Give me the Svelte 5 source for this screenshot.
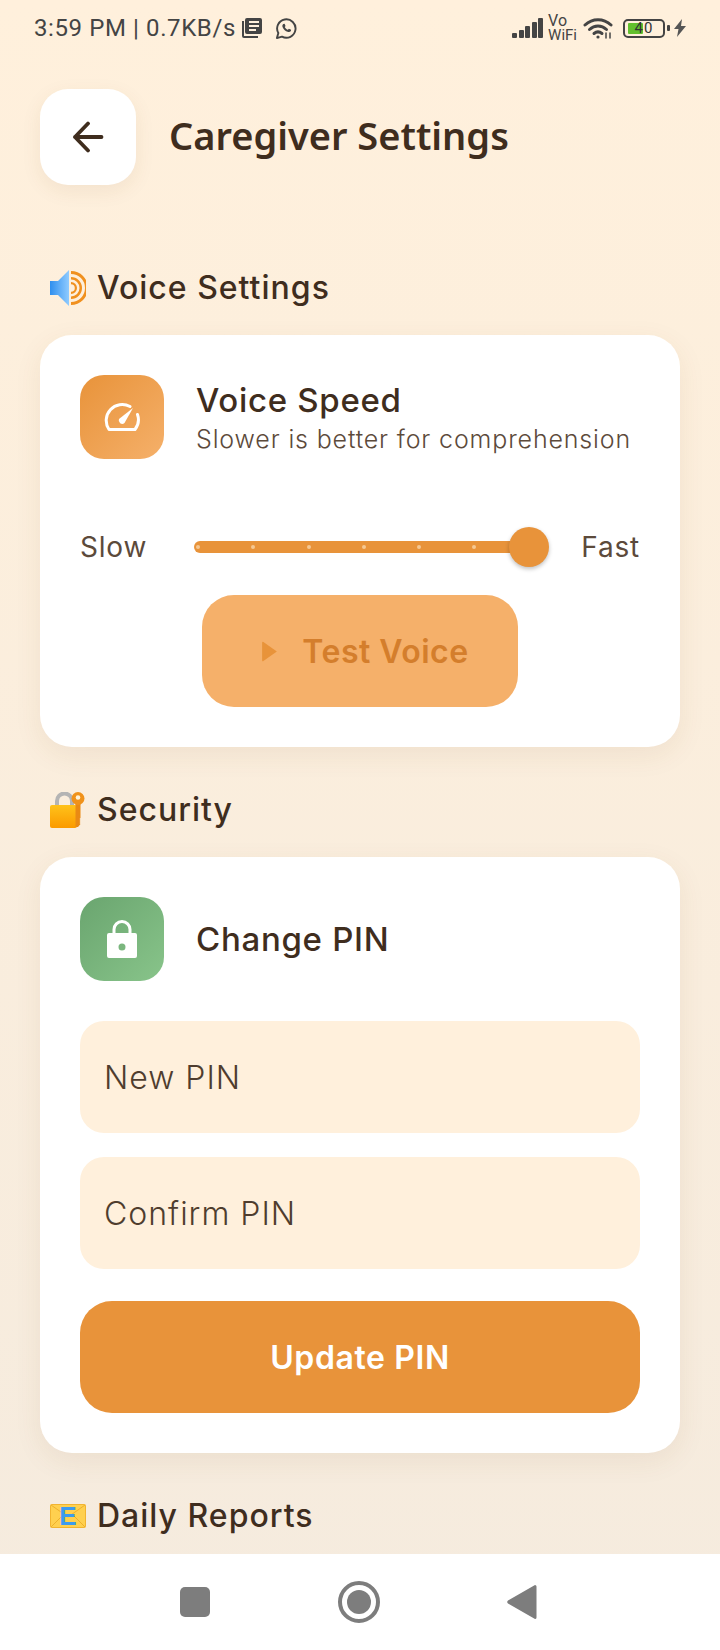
<script lang="ts">
	const ticks = [0, 1, 2, 3, 4, 5, 6];
</script>

<div class="screen">
	<div class="status">
		<span class="clock">3:59 PM | 0.7KB/s</span>
		<svg class="ic-news" viewBox="0 0 20 20" width="20" height="20">
			<path d="M0 3h2v15h14v2H2a2 2 0 0 1-2-2z" fill="#444"/>
			<path fill-rule="evenodd" d="M5 0h13a2 2 0 0 1 2 2v12a2 2 0 0 1-2 2H5a2 2 0 0 1-2-2V2a2 2 0 0 1 2-2zm2 3v2h10V3zm0 4v2h10V7zm0 4v2h7v-2z" fill="#444"/>
		</svg>
		<svg class="ic-wa" viewBox="0 0 24 24" width="23" height="23" fill="none">
			<path d="M2 22l1.5-5.2A9.6 9.6 0 1 1 7.300 20.500z" stroke="#444" stroke-width="2" stroke-linejoin="round"/>
			<path d="M8.600 7.200c-1 .8-1.200 2.200-.5 3.700 1 2 2.900 3.800 5 4.600 1.500.5 2.800.2 3.500-.9l.2-1.300-2.300-1.100-1 1.200c-1.300-.5-2.600-1.700-3.300-3l.8-1-1-2.400z" fill="#444"/>
		</svg>
		<span class="grow"></span>
		<div class="bars">
			<i style="height: 5px"></i><i style="height: 8px"></i><i style="height: 12px"></i><i style="height: 16px"></i><i style="height: 20px"></i>
		</div>
		<div class="vowifi"><span class="vo">Vo</span><span>WiFi</span></div>
		<svg class="ic-wifi" viewBox="0 0 30 22" width="30" height="22" fill="none" stroke="#444" stroke-linecap="round">
			<path d="M2 8C9.500 1 20.500 1 28 8" stroke-width="3"/>
			<path d="M6.500 12.500c5-4.600 12-4.600 17 0" stroke-width="3"/>
			<path d="M11 16.500c2.500-2 5.500-2 8 0" stroke-width="3"/>
			<circle cx="15" cy="20" r="1.600" fill="#444" stroke="none"/>
			<path d="M23 16v5M27 16v5" stroke-width="1.500"/>
		</svg>
		<div class="battery">
			<div class="cell"><span class="level"></span><span class="pct">40</span></div>
			<span class="nub"></span>
		</div>
		<svg class="ic-bolt" viewBox="0 0 12 18" width="12" height="18"><path d="M8 0L0 10h4.500L3 18l9-11H7z" fill="#555"/></svg>
	</div>

	<main class="content">
		<div class="header">
			<button class="back" aria-label="Back">
				<svg viewBox="0 0 32 32" width="32" height="32" fill="none" stroke="#3f2d1e" stroke-width="3.800" stroke-linecap="round" stroke-linejoin="round">
					<path d="M29.500 16H3M16 2.500L3 16l13 13.500"/>
				</svg>
			</button>
			<h1>Caregiver Settings</h1>
		</div>

		<h2 class="section first">
			<svg viewBox="0 0 36 36" width="36" height="36">
				<defs>
					<linearGradient id="spk" x1="0" y1="0" x2="1" y2="0"><stop offset="0" stop-color="#2f8fee"/><stop offset="1" stop-color="#8fcbff"/></linearGradient>
				</defs>
				<path d="M0 11h8L19 0v36L8 25H0z" fill="url(#spk)"/>
				<path d="M21 1a17 17 0 0 1 0 34v-3a14 14 0 0 0 0-28z" fill="#f0901e"/>
				<path d="M21 7a11 11 0 0 1 0 22v-2.500a8.500 8.500 0 0 0 0-17z" fill="#f0901e"/>
				<path d="M21 12a6 6 0 0 1 0 12v-2.200a3.800 3.800 0 0 0 0-7.600z" fill="#f0901e"/>
			</svg>
			Voice Settings
		</h2>
		<section class="card">
			<div class="row">
				<div class="tile orange">
					<svg viewBox="0 0 36 30" width="36" height="30" fill="none" stroke="#fff" stroke-width="3" stroke-linecap="round" stroke-linejoin="round">
						<path d="M26 4.500A16 16 0 0 0 5 27.500h26a16 16 0 0 0 2.500-15"/>
						<path d="M15 17l14-11-8.500 15a3.500 3.500 0 0 1-5.500-4z" fill="#fff" stroke="none"/>
					</svg>
				</div>
				<div class="row-text">
					<div class="row-title">Voice Speed</div>
					<div class="row-sub">Slower is better for comprehension</div>
				</div>
			</div>
			<div class="slider-row">
				<span class="end">Slow</span>
				<div class="slider">
					<div class="track">
						{#each ticks as t (t)}<span class="tick"></span>{/each}
					</div>
					<span class="thumb"></span>
				</div>
				<span class="end">Fast</span>
			</div>
			<button class="test">
				<svg viewBox="0 0 16 20" width="17" height="21"><path d="M1 1.500a.8.8 0 0 1 1.200-.6L15 10 2.200 19.100a.8.8 0 0 1-1.200-.6z" fill="#e8933a"/></svg>
				<span>Test Voice</span>
			</button>
		</section>

		<h2 class="section">
			<svg viewBox="0 0 36 36" width="36" height="36">
				<defs>
					<linearGradient id="lockfill" x1="0" y1="0" x2="0" y2="1"><stop offset="0" stop-color="#ffc21a"/><stop offset="1" stop-color="#fb9a00"/></linearGradient>
				</defs>
				<path d="M7 15V9a7.500 7.500 0 0 1 15 0v6" fill="none" stroke="#b4b4b4" stroke-width="4"/>
				<rect x="0" y="13" width="27" height="23" rx="2" fill="url(#lockfill)"/>
				<path d="M25.500 10h5v16l-1 1 1 1-1 1 1 1-1 1 1 1-2.500 3h-2.500z" fill="#e98a14"/>
				<circle cx="28" cy="6.500" r="6.500" fill="#f0921a"/>
				<circle cx="28" cy="5.500" r="2.300" fill="#fff3d8"/>
			</svg>
			Security
		</h2>
		<section class="card">
			<div class="row">
				<div class="tile green">
					<svg viewBox="0 0 30 38" width="30" height="38">
						<path d="M7 15V9.500a8 8 0 0 1 16 0V15" fill="none" stroke="#fff" stroke-width="3"/>
						<path fill-rule="evenodd" d="M2 13h26a2 2 0 0 1 2 2v21a2 2 0 0 1-2 2H2a2 2 0 0 1-2-2V15a2 2 0 0 1 2-2zm13 10.500a3.500 3.500 0 1 0 0 7 3.500 3.500 0 0 0 0-7z" fill="#fff"/>
					</svg>
				</div>
				<div class="row-title">Change PIN</div>
			</div>
			<input class="field first-field" type="password" placeholder="New PIN" />
			<input class="field" type="password" placeholder="Confirm PIN" />
			<button class="update">Update PIN</button>
		</section>

		<h2 class="section">
			<svg viewBox="0 0 36 36" width="36" height="36">
				<rect x="0.500" y="6.500" width="35" height="23" rx="1" fill="#ffd04f" stroke="#f2b430"/>
				<path d="M1 7l17 12L35 7M1 29l12-12M35 29L23 17" fill="none" stroke="#eeb02c" stroke-width="1"/>
				<text x="18" y="27" text-anchor="middle" class="env">E</text>
			</svg>
			Daily Reports
		</h2>
	</main>

	<nav class="nav">
		<span class="nav-square"></span>
		<span class="nav-home"><span></span></span>
		<svg viewBox="0 0 30 36" width="30" height="36"><path d="M28 1a1.500 1.500 0 0 1 1.500 1.500v31A1.500 1.500 0 0 1 28 35L1 19.500a1.800 1.800 0 0 1 0-3z" fill="#7d7d7d"/></svg>
	</nav>
</div>

<style>
	:global(body) {
		margin: 0;
	}
	.screen {
		width: 720px;
		height: 1650px;
		display: flex;
		flex-direction: column;
		overflow: hidden;
		background: linear-gradient(180deg, #fff0dc 0%, #f5ebde 100%);
		font-family: Inter, "Noto Sans", sans-serif;
		color: #3f2d1e;
	}
	.status {
		height: 56px;
		flex: none;
		display: flex;
		align-items: center;
		padding: 0 34px;
		color: #444;
	}
	.clock {
		font-family: Roboto, sans-serif;
		font-size: 24px;
		letter-spacing: 0.6px;
	}
	.ic-news {
		margin-left: 6px;
	}
	.ic-wa {
		margin-left: 13px;
	}
	.grow {
		flex: 1;
	}
	.bars {
		display: flex;
		align-items: flex-end;
		gap: 1.5px;
		height: 20px;
	}
	.bars i {
		width: 5px;
		background: #444;
		border-radius: 1px;
	}
	.vowifi {
		display: flex;
		flex-direction: column;
		margin-left: 5px;
		font-family: Roboto, sans-serif;
		font-size: 15px;
		line-height: 14px;
		color: #444;
	}
	.vo {
		font-size: 16px;
		line-height: 14px;
	}
	.ic-wifi {
		margin-left: 6px;
	}
	.battery {
		display: flex;
		align-items: center;
		gap: 2px;
		margin-left: 10px;
	}
	.cell {
		position: relative;
		width: 38px;
		height: 15px;
		border: 2px solid #444;
		border-radius: 5px;
		display: flex;
		align-items: center;
		justify-content: center;
	}
	.level {
		position: absolute;
		left: 3px;
		top: 2px;
		bottom: 2px;
		width: 15px;
		background: #62c02e;
		border-radius: 1px;
	}
	.pct {
		position: relative;
		font-family: Roboto, sans-serif;
		font-size: 15px;
		line-height: 15px;
		letter-spacing: 1px;
		color: #333;
	}
	.nub {
		width: 3px;
		height: 6px;
		background: #444;
		border-radius: 1px;
	}
	.ic-bolt {
		margin-left: 4px;
	}
	.content {
		flex: 1;
		padding: 33px 40px 0;
		min-height: 0;
	}
	.header {
		display: flex;
		align-items: center;
		gap: 33px;
	}
	.back {
		width: 96px;
		height: 96px;
		border: none;
		border-radius: 28px;
		background: #fff;
		box-shadow: 0 6px 20px rgba(120, 80, 30, 0.08);
		display: flex;
		align-items: center;
		justify-content: center;
		padding: 0;
	}
	h1 {
		margin: 0 0 4px;
		font-family: "Noto Sans", sans-serif;
		font-size: 38px;
		font-weight: 600;
		line-height: 48px;
	}
	.section {
		margin: 39px 0 23px;
		height: 48px;
		display: flex;
		align-items: center;
		gap: 11px;
		padding-left: 10px;
		font-size: 32px;
		font-weight: 500;
		line-height: 48px;
		letter-spacing: 1px;
	}
	.section.first {
		margin-top: 79px;
	}
	.section svg {
		flex: none;
	}
	.env {
		font-family: "Liberation Sans", sans-serif;
		font-size: 26px;
		font-weight: 700;
		fill: #3d9bf0;
		letter-spacing: 0;
	}
	.card {
		background: #fff;
		border-radius: 32px;
		padding: 40px;
		box-shadow: 0 8px 28px rgba(120, 80, 30, 0.08);
		display: flex;
		flex-direction: column;
	}
	.row {
		display: flex;
		align-items: center;
		gap: 32px;
	}
	.tile {
		width: 84px;
		height: 84px;
		flex: none;
		border-radius: 24px;
		display: flex;
		align-items: center;
		justify-content: center;
	}
	.tile.orange {
		background: linear-gradient(135deg, #e8933a, #f5b06a);
	}
	.tile.green {
		background: linear-gradient(135deg, #6aa56f, #88c48a);
	}
	.row-title {
		font-size: 33px;
		font-weight: 500;
		line-height: 44px;
		letter-spacing: 0.7px;
	}
	.row-sub {
		font-size: 25px;
		line-height: 34px;
		letter-spacing: 0.85px;
		font-weight: 300;
		color: #5c4a3b;
	}
	.slider-row {
		margin-top: 68px;
		display: flex;
		align-items: center;
		gap: 30px;
	}
	.end {
		flex: none;
		font-size: 28px;
		line-height: 40px;
		letter-spacing: 0.8px;
		color: #5c4a3b;
	}
	.slider {
		position: relative;
		flex: 1;
		height: 40px;
		display: flex;
		align-items: center;
		padding-right: 16px;
		margin: 0 2px 0 17px;
	}
	.track {
		flex: 1;
		height: 12px;
		padding: 0 2px;
		border-radius: 6px;
		background: #e8933a;
		display: flex;
		align-items: center;
		justify-content: space-between;
	}
	.tick {
		width: 4px;
		height: 4px;
		border-radius: 50%;
		background: #f5c892;
	}
	.thumb {
		position: absolute;
		right: 0;
		top: 0;
		width: 40px;
		height: 40px;
		border-radius: 50%;
		background: #e8933a;
		box-shadow: 0 2px 4px rgba(0, 0, 0, 0.25);
	}
	.test {
		margin: 28px auto 0;
		width: 316px;
		height: 112px;
		border: none;
		border-radius: 32px;
		background: #f5b06a;
		color: #d47e2c;
		font: inherit;
		font-size: 32px;
		font-weight: 600;
		letter-spacing: 0.5px;
		display: flex;
		align-items: center;
		justify-content: center;
		gap: 24px;
		padding: 0 0 0 10px;
	}
	.field {
		display: block;
		box-sizing: border-box;
		width: 100%;
		height: 112px;
		margin-top: 24px;
		padding: 0 24px;
		border: none;
		border-radius: 24px;
		background: #fff0dc;
		font: inherit;
		font-size: 32px;
		letter-spacing: 1px;
		outline: none;
	}
	.field::placeholder {
		color: #4f3d2e;
		opacity: 1;
		font-weight: 300;
	}
	.first-field {
		margin-top: 40px;
	}
	.update {
		margin-top: 32px;
		height: 112px;
		border: none;
		border-radius: 32px;
		background: #e8933a;
		color: #fff;
		font: inherit;
		font-size: 32px;
		font-weight: 600;
		letter-spacing: 0.6px;
		padding: 0;
	}
	.nav {
		height: 96px;
		flex: none;
		background: #fff;
		display: flex;
		align-items: center;
		justify-content: space-between;
		padding: 0 183px 0 180px;
	}
	.nav-square {
		width: 30px;
		height: 30px;
		border-radius: 5px;
		background: #7d7d7d;
	}
	.nav-home {
		box-sizing: border-box;
		width: 42px;
		height: 42px;
		border: 4px solid #7d7d7d;
		border-radius: 50%;
		display: flex;
		align-items: center;
		justify-content: center;
	}
	.nav-home span {
		width: 24px;
		height: 24px;
		border-radius: 50%;
		background: #7d7d7d;
	}
</style>
